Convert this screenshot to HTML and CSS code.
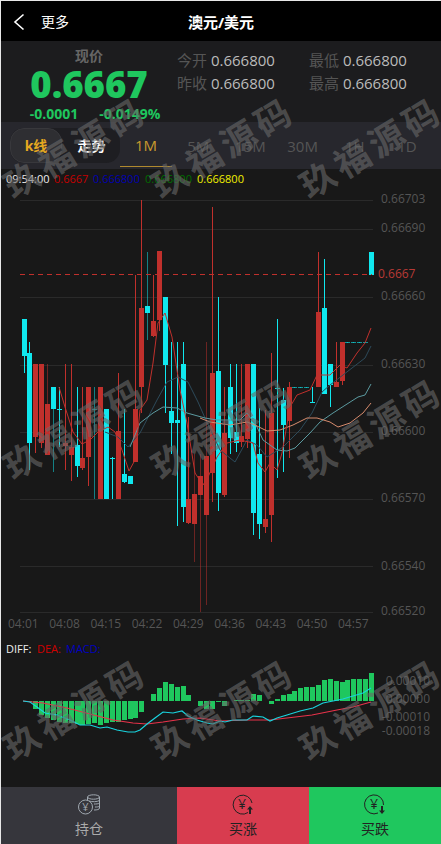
FILE: index.html
```html
<!DOCTYPE html>
<html>
<head>
  <meta charset="UTF-8">
  <title>澳元/美元</title>
  <link rel="stylesheet" href="styles.css">
</head>
<body>
  <div class="page">
    <div class="header">
      <svg class="back_icon" width="12" height="18" viewBox="0 0 12 18"><path d="M10.5 1.5 L2 9 L10.5 16.5" fill="none" stroke="#fff" stroke-width="1.6"/></svg>
      <span class="more">更多</span>
      <span class="title">澳元/美元</span>
    </div>

    <div class="quote">
      <div class="price_box">
        <span class="price_label">现价</span>
        <span class="price">0.6667</span>
        <div class="change">
          <span>-0.0001</span>
          <span>-0.0149%</span>
        </div>
      </div>
      <div class="stats">
        <div class="stat"><span class="stat_label">今开</span> 0.666800</div>
        <div class="stat"><span class="stat_label">最低</span> 0.666800</div>
        <div class="stat"><span class="stat_label">昨收</span> 0.666800</div>
        <div class="stat"><span class="stat_label">最高</span> 0.666800</div>
      </div>
    </div>

    <div class="tabs">
      <div class="switch">
        <span class="switch_item switch_active">k线</span>
        <span class="switch_item">走势</span>
      </div>
      <span class="tab tab_active">1M</span>
      <span class="tab">5M</span>
      <span class="tab">15M</span>
      <span class="tab">30M</span>
      <span class="tab">1H</span>
      <span class="tab">1D</span>
    </div>

    <div class="chart">
      <svg id="chart_svg" class="chart_svg" width="440" height="618" viewBox="1 169 440 618">
        <g id="grid" shape-rendering="crispEdges"></g>
        <g id="candles" shape-rendering="crispEdges"></g>
        <g id="lines"></g>
        <g id="macd"></g>
        <g class="legend">
          <text x="6" y="183" fill="#eee">09:54:00</text>
          <text x="54" y="183" fill="#c40000">0.6667</text>
          <text x="93" y="183" fill="#0000b0">0.666800</text>
          <text x="145" y="183" fill="#006e00">0.666800</text>
          <text x="197" y="183" fill="#f0f000">0.666800</text>
          <text x="6" y="653" fill="#eee">DIFF:</text>
          <text x="37" y="653" fill="#d00000">DEA:</text>
          <text x="66" y="653" fill="#0000c0">MACD:</text>
        </g>
      </svg>
    </div>

    <div class="footer">
      <div class="action action_hold">
        <svg class="action_icon" width="26" height="24" viewBox="0 0 26 24" fill="none" stroke="#a0a8b0" stroke-width="1">
          <ellipse cx="17.5" cy="4" rx="6" ry="2.2"/>
          <path d="M11.5 4 V8 M23.5 4 V15 C23.5 16.5 21 17 18 17 M13 8 C16 9 21 9 23.5 7.5 M18 11 C20 11 22.500 11 23.5 10 M19 14 C21 14 22.500 14 23.5 13"/>
          <circle cx="9.500" cy="14" r="7" fill="#36363c"/>
          <text x="9.500" y="18" class="yen_small" fill="#a0a8b0" stroke="none">¥</text>
        </svg>
        <span>持仓</span>
      </div>
      <div class="action action_up">
        <svg class="action_icon" width="26" height="24" viewBox="0 0 26 24" fill="none" stroke="#222" stroke-width="1">
          <path d="M18 19.500 A9.500 9.500 0 1 1 22 10"/>
          <text x="12" y="16" class="yen" fill="#222" stroke="none">¥</text>
          <path d="M20 13 L23 16.500 H21 V21 H19 V16.500 H17 Z" fill="#222" stroke="none"/>
        </svg>
        <span>买涨</span>
      </div>
      <div class="action action_down">
        <svg class="action_icon" width="26" height="24" viewBox="0 0 26 24" fill="none" stroke="#222" stroke-width="1">
          <path d="M16 20 A9.500 9.500 0 1 1 21.500 12"/>
          <text x="12" y="16" class="yen" fill="#222" stroke="none">¥</text>
          <path d="M20 21 L23 17.500 H21 V13 H19 V17.500 H17 Z" fill="#222" stroke="none"/>
        </svg>
        <span>买跌</span>
      </div>
    </div>

    <div class="watermarks">
      <span class="watermark">玖福源码</span>
      <span class="watermark">玖福源码</span>
      <span class="watermark">玖福源码</span>
      <span class="watermark">玖福源码</span>
      <span class="watermark">玖福源码</span>
      <span class="watermark">玖福源码</span>
      <span class="watermark">玖福源码</span>
      <span class="watermark">玖福源码</span>
      <span class="watermark">玖福源码</span>
    </div>
  </div>

  <script src="chart.js"></script>
</body>
</html>
```

FILE: styles.css
```css
* {
  box-sizing: border-box;
}
html, body {
  margin: 0;
  height: 100%;
  background: #181818;
  overflow: hidden;
}
body {
  font-family: "Open Sans", "Noto Sans CJK SC", sans-serif;
}
.page {
  position: relative;
  width: 441px;
  height: 844px;
  display: flex;
  flex-direction: column;
  overflow: hidden;
  border-top: 1px solid #e8e8e8;
  border-left: 1px solid #e8e8e8;
}
.header {
  position: relative;
  flex: none;
  height: 40px;
  background: #000;
  display: flex;
  align-items: center;
  color: #fff;
}
.back_icon {
  margin: 2px 0 0 12px;
}
.more {
  margin-left: 16px;
  font-size: 14px;
}
.title {
  position: absolute;
  left: 0;
  right: 0;
  text-align: center;
  font-size: 15px;
  font-weight: 700;
}
.quote {
  flex: none;
  height: 81px;
  background: #1c1c1e;
  display: flex;
}
.price_box {
  width: 177px;
  display: flex;
  flex-direction: column;
  align-items: center;
  padding-top: 5px;
}
.price_label {
  font-size: 14px;
  line-height: 20px;
  font-weight: 700;
  color: #666;
}
.price {
  font-size: 36.5px;
  line-height: 37px;
  font-weight: 800;
  color: #1fc75e;
}
.change {
  display: flex;
  gap: 21px;
  padding: 2px 0 0 12px;
  font-size: 14px;
  line-height: 18px;
  font-weight: 700;
  color: #1fc75e;
}
.stats {
  display: grid;
  grid-template-columns: 132px 132px;
  grid-auto-rows: 23px;
  padding-top: 8px;
  font-size: 15px;
  line-height: 23px;
  color: #bbb;
}
.stat_label {
  color: #555;
}
.tabs {
  flex: none;
  height: 47px;
  background: #27272d;
  display: flex;
  align-items: center;
  padding: 0 8px 0 9px;
}
.switch {
  width: 110px;
  height: 35px;
  flex: none;
  display: flex;
  align-items: center;
  background: #1e1e22;
  border-radius: 14px;
}
.switch_item {
  width: 53px;
  text-align: center;
  font-size: 14px;
  font-weight: 700;
  color: #fff;
  line-height: 33px;
}
.switch_active {
  width: 52px;
  margin-right: 3px;
  background: #2e2e32;
  border: 1px solid #38383c;
  border-radius: 14px;
  color: #e6a820;
}
.tab {
  flex: 1;
  height: 100%;
  display: flex;
  align-items: center;
  justify-content: center;
  font-size: 15px;
  color: #555;
}
.tab_active {
  color: #c99a2e;
  height: 43px;
  margin-top: -1px;
  border-bottom: 1px solid #b08a2e;
}
.chart {
  flex: 1;
  min-height: 0;
  background: #181818;
}
.chart_svg {
  display: block;
}
.legend text {
  font-size: 11px;
}
.axis_label {
  font-size: 12px;
  fill: #555;
}
.footer {
  flex: none;
  height: 57px;
  display: flex;
}
.action {
  display: flex;
  flex-direction: column;
  align-items: center;
  padding-top: 6px;
  font-size: 14px;
  line-height: 21px;
  color: #222;
}
.action_icon {
  display: block;
  margin-bottom: 1px;
}
.action_hold {
  width: 176px;
  background: #36363c;
  color: #aaa;
}
.action_up {
  width: 132px;
  background: #d83c4f;
}
.action_down {
  width: 132px;
  background: #1fc75e;
}
.yen {
  font-size: 14px;
  text-anchor: middle;
}
.yen_small {
  font-size: 11px;
  text-anchor: middle;
}
.watermarks {
  position: absolute;
  top: 4px;
  left: -1px;
  display: grid;
  grid-template-columns: repeat(3, 148px);
  grid-auto-rows: 281px;
  place-items: center;
  pointer-events: none;
}
.watermark {
  display: block;
  white-space: nowrap;
  transform: rotate(-31deg);
  font-family: "Noto Sans CJK SC", sans-serif;
  font-size: 35px;
  font-weight: 700;
  letter-spacing: 5px;
  color: rgba(104, 104, 104, .62);
}
```

FILE: chart.js
```js
const SVG_NS = 'http://www.w3.org/2000/svg';
const RED = '#c0302c';
const CYAN = '#10e8ef';
const GREEN = '#1fc75e';

const element = id => document.getElementById(id);

function add(parent, tag, attrs, text) {
  const node = document.createElementNS(SVG_NS, tag);
  Object.keys(attrs).forEach(key => node.setAttribute(key, attrs[key]));
  if (text) node.textContent = text;
  parent.appendChild(node);
  return node;
}

const candleX = i => Math.round(23.5 + 5.89 * i);

// grid and axis labels
const grid = element('grid');
[
  [200, '0.66703', 203], [229, '0.66690', 232], [297, '0.66660', 300], [365, '0.66630', 368],
  [432, '0.66600', 435], [499, '0.66570', 502], [566, '0.66540', 570], [612, '0.66520', 615],
].forEach(([y, label, textY]) => {
  add(grid, 'rect', { x: 20, y: y, width: 353, height: 1, fill: '#2a2a2a' });
  add(grid, 'text', { x: 381, y: textY, class: 'axis_label' }, label);
});
['04:01', '04:08', '04:15', '04:22', '04:29', '04:36', '04:43', '04:50', '04:57'].forEach((label, i) => {
  add(grid, 'text', { x: 8 + i * 41.25, y: 628, class: 'axis_label' }, label);
});
[['0.00010', 685], ['0.00000', 703], ['-0.00010', 721], ['-0.00018', 735]].forEach(([label, y]) => {
  add(grid, 'text', { x: 430, y: y, class: 'axis_label', 'text-anchor': 'end' }, label);
});

// color, body top, body bottom, wick top, wick bottom, dim wick
const CANDLES = [
  ['c', 319, 356, 319, 373], ['c', 353, 443, 342, 470], ['r', 364, 437, 364, 453], ['r', 364, 443, 364, 448],
  ['r', 404, 455, 364, 455, 1], ['c', 387, 409, 387, 472, 1], ['c', 409, 409, 387, 447], ['r', 443, 446, 364, 470],
  ['r', 447, 455, 364, 481], ['c', 445, 466, 387, 477], ['r', 458, 468, 387, 470], ['r', 387, 457, 387, 486],
  ['c', 409, 409, 387, 499, 1], ['r', 387, 499, 387, 499], ['c', 409, 499, 409, 499], ['c', 458, 458, 457, 499],
  ['r', 431, 499, 373, 499], ['c', 474, 482, 409, 483], ['c', 476, 484, 476, 484], ['r', 409, 462, 275, 462],
  ['r', 308, 387, 200, 413], ['c', 306, 313, 252, 340, 1], ['r', 321, 336, 275, 337], ['r', 251, 320, 251, 331],
  ['c', 297, 365, 297, 413], ['c', 411, 423, 342, 454], ['c', 420, 423, 342, 526], ['c', 364, 507, 342, 522],
  ['r', 499, 523, 417, 524], ['r', 494, 524, 454, 562, 1], ['r', 476, 495, 454, 612, 1], ['r', 456, 515, 342, 605, 1],
  ['r', 373, 473, 207, 502], ['c', 371, 493, 297, 511], ['r', 433, 495, 387, 497], ['c', 387, 438, 364, 454],
  ['c', 432, 443, 364, 452], ['r', 436, 442, 364, 447], ['r', 364, 439, 364, 448], ['c', 364, 513, 364, 535],
  ['c', 454, 524, 408, 539], ['r', 519, 527, 410, 533], ['r', 413, 515, 353, 542], ['c', 388, 388, 319, 478],
  ['c', 400, 425, 388, 472], ['r', 387, 421, 382, 458], ['c', 387, 387, 387, 387, 1], ['c', 387, 387, 387, 387, 1],
  ['c', 387, 387, 387, 387, 1], ['c', 402, 402, 387, 402], ['r', 312, 387, 252, 387], ['c', 308, 394, 259, 394],
  ['c', 364, 385, 364, 407], ['r', 382, 387, 342, 387], ['r', 342, 381, 342, 385], ['c', 342, 342, 342, 342, 1],
  ['c', 342, 342, 342, 342, 1], ['c', 342, 342, 342, 342, 1], ['c', 342, 342, 342, 342, 1], ['c', 252, 275, 252, 275],
];

const candles = element('candles');
CANDLES.forEach(([kind, top, bottom, wickTop, wickBottom, dim], i) => {
  const x = candleX(i);
  const fill = kind === 'r' ? RED : CYAN;
  add(candles, 'rect', {
    x: x, y: wickTop, width: 1, height: Math.max(wickBottom - wickTop, 1), fill: fill, opacity: dim ? 0.5 : 1,
  });
  if (bottom > top) {
    add(candles, 'rect', { x: x - 2, y: top, width: 5, height: bottom - top, fill: fill });
  } else {
    add(candles, 'rect', { x: x - 2, y: top, width: 5, height: 1, fill: fill, opacity: dim ? 0.6 : 1 });
  }
});

// moving averages
const MA_LINES = [
  ['#2d4a5a', '105,432 118,437 128,447 140,433 157,400 167,382 178,377 188,382 198,402 205,418 220,450 235,462 247,440 257,445 267,457 283,447 300,430 312,413 322,392 330,385 365,358 371,346'],
  ['#5b9aa0', '130,447 140,423 153,413 163,407 177,408 187,413 205,418 217,420 240,420 247,413 257,427 263,440 277,450 287,451 295,448 310,433 320,422 333,413 358,397 365,395 371,384'],
  ['#d68b6d', '200,418 210,422 230,425 247,422 255,425 267,431 280,430 293,425 307,418 317,418 330,422 338,427 350,423 363,413 371,403'],
  [RED, '59,387 65,407 73,432 82,444 90,440 98,432 108,427 115,432 122,450 129,471 135,460 140,410 147,400 153,363 158,323 165,313 172,337 180,390 187,423 195,473 203,485 208,477 217,457 227,443 240,440 253,443 258,463 265,472 270,463 277,470 282,453 290,407 297,395 310,390 317,375 330,375 340,365 347,368 357,353 365,343 371,328'],
];

const lines = element('lines');
MA_LINES.forEach(([color, points]) => {
  add(lines, 'polyline', { points: points, fill: 'none', stroke: color, 'stroke-width': 1 });
});

// red dashed price line
add(lines, 'line', { x1: 20, y1: 274.5, x2: 372, y2: 274.5, stroke: RED, 'stroke-dasharray': '5 4' });
add(lines, 'text', { x: 378, y: 278, class: 'axis_label', style: 'fill:#b83a36' }, '0.6667');

// macd histogram, zero at y=701
const MACD_BARS = [
  0, -1, -8, -14, -17, -19, -21, -22, -22, -23, -24, -23, -22, -24, -22, -21, -21, -19, -18, -17,
  -11, 0, 7, 13, 19, 17, 14, 15, 6, 0, -5, -8, -8, -1, -5, 0, 1, 1, 1, 7,
  6, 0, -3, 2, 6, 7, 10, 13, 14, 14, 16, 21, 22, 20, 19, 21, 22, 22, 22, 28,
];

const macd = element('macd');
MACD_BARS.forEach((value, i) => {
  if (value === 0) return;
  add(macd, 'rect', {
    x: candleX(i) - 2,
    y: value > 0 ? 701 - value : 701,
    width: 5,
    height: Math.abs(value),
    fill: GREEN,
  });
});

add(macd, 'polyline', {
  points: '23,701 43,703 67,708 90,714 113,720 133,723 147,724 163,722 183,719 200,718 220,721 247,720 270,720 287,718 312,715 337,710 353,707 371,702',
  fill: 'none',
  stroke: '#e8324a',
  'stroke-width': 1.2,
});
add(macd, 'polyline', {
  points: '23,701 30,702 37,707 45,713 57,715 70,720 80,725 90,725 100,728 107,727 117,730 128,732 135,732 140,730 147,724 155,718 163,712 173,713 182,711 188,716 197,720 207,723 213,724 220,721 225,722 233,720 247,720 253,716 263,717 270,721 277,718 287,715 300,711 313,708 323,703 333,701 343,699 353,696 363,693 371,688',
  fill: 'none',
  stroke: '#19d3de',
  'stroke-width': 1.2,
});
```
